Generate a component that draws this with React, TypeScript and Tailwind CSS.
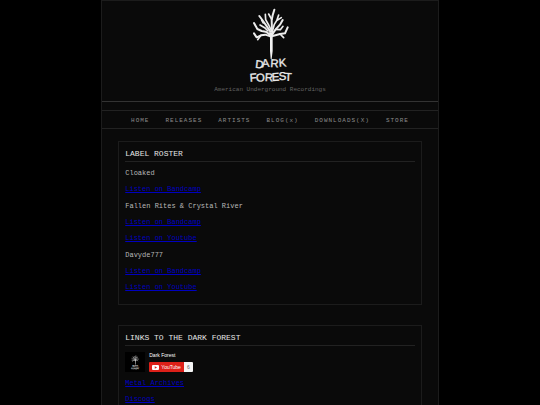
import React from "react";

interface NavItem {
  label: string;
  href: string;
}

interface Artist {
  name: string;
  links: string[];
}

const navItems: NavItem[] = [
  { label: "HOME", href: "#home" },
  { label: "RELEASES", href: "#releases" },
  { label: "ARTISTS", href: "#artists" },
  { label: "BLOG(x)", href: "#blog" },
  { label: "DOWNLOADS(X)", href: "#downloads" },
  { label: "STORE", href: "#store" },
];

const roster: Artist[] = [
  { name: "Cloaked", links: ["Listen on Bandcamp"] },
  {
    name: "Fallen Rites & Crystal River",
    links: ["Listen on Bandcamp", "Listen on Youtube"],
  },
  { name: "Davyde777", links: ["Listen on Bandcamp", "Listen on Youtube"] },
];

const Logo: React.FC<{ className: string }> = ({ className }) => (
  <svg viewBox="0 0 180 252" className={className} role="img" aria-label="Dark Forest">
    {/* trunk */}
    <path d="M87 94 L101 94 L98 110 L98 150 L95 174 L92 174 L90 150 L90 110 Z" fill="#f2f2f2" />
    {/* branches */}
    <g fill="none" stroke="#ececec" strokeLinecap="round" strokeLinejoin="round">
      <path
        strokeWidth="6"
        d="M42 97 L50 109 L63 103 L76 101 L93 107 M42 66 L52 84 L65 90 L77 92 L92 102 M58 45 L67 57 L79 74 L91 92 M103 26 L98 43 L95 57 L96 92 M128 57 L120 71 L107 85 L98 98 M143 79 L135 97 L120 99 L98 105"
      />
      <path
        strokeWidth="5"
        d="M76 40 L77 56 L86 72 L94 88 M86 39 L95 55 M116 42 L110 59 L103 70 L98 88 M60 72 L74 80 L84 90 M63 103 L53 116 M120 99 L131 110 M107 85 L121 86 L129 76 M110 59 L124 50 M65 57 L70 66"
      />
    </g>
    {/* lettering */}
    <g
      fill="#ececec"
      stroke="#ececec"
      strokeWidth="1"
      fontFamily="'Liberation Sans', Arial, sans-serif"
      fontSize="34"
    >
      <text x="45 66 91 117" y="200 199 198 197" rotate="6 -4 3 -4">
        DARK
      </text>
      <text x="30 49 74 96 117 134" y="242 242 240 240 238 239" rotate="-4 -4 3 -3 -4 2">
        FOREST
      </text>
    </g>
  </svg>
);

const Panel: React.FC<{ title: string; children: React.ReactNode }> = ({
  title,
  children,
}) => (
  <section className="border border-[#1c1c1c] px-1.5 pt-1.5 pb-3">
    <h2 className="mb-1.5 border-b border-[#222222] pb-px text-[8px] leading-3 text-[#e4e4e4]">
      {title}
    </h2>
    {children}
  </section>
);

const TextLink: React.FC<{ href: string; children: React.ReactNode }> = ({
  href,
  children,
}) => (
  <a href={href} className="text-[#0000c0] underline">
    {children}
  </a>
);

const YoutubeBadge: React.FC = () => (
  <div className="flex gap-1 font-['Liberation_Sans',Arial,sans-serif]">
    <div className="flex size-5 items-center justify-center bg-black">
      <Logo className="h-4 w-3" />
    </div>
    <div className="flex flex-col gap-1">
      <span className="text-[5px] leading-[6px] text-white">Dark Forest</span>
      <a href="#youtube" className="flex h-2.5 text-[5px] leading-[10px]">
        <span className="flex items-center gap-0.5 rounded-l-[1px] bg-[#dd2019] px-[3px] text-white">
          <svg viewBox="0 0 14 10" className="h-[5px] w-[7px]" aria-hidden="true">
            <rect width="14" height="10" rx="2" fill="#ffffff" />
            <path d="M5.5 2.5 L10 5 L5.5 7.5 Z" fill="#dd2019" />
          </svg>
          YouTube
        </span>
        <span className="w-[9px] rounded-r-[1px] bg-[#f5f5f5] text-center text-[#666666]">
          6
        </span>
      </a>
    </div>
  </div>
);

const App: React.FC = () => {
  return (
    <div className="min-h-screen bg-black font-['Liberation_Mono','Courier_New',monospace]">
      <div className="mx-auto min-h-screen w-5/8 max-w-[1080px] border border-[#1c1c1c] bg-[#0a0a0a]">
        <header className="flex flex-col items-center border-b border-[#333333] pb-1.5">
          <Logo className="h-[84px] w-[60px]" />
          <p className="text-[6px] leading-[10px] text-[#626262]">
            American Underground Recordings
          </p>
        </header>

        <nav className="mt-2 flex justify-center gap-4 border-y border-[#222222] pt-0.5 text-[6px] leading-[15px] tracking-[1px] text-[#8a8a8a]">
          {navItems.map((item) => (
            <a key={item.label} href={item.href}>
              {item.label}
            </a>
          ))}
        </nav>

        <main className="flex flex-col gap-5 px-4 py-3 text-[7px] leading-[10px] text-[#b8b8b8]">
          <Panel title="LABEL ROSTER">
            <div className="flex flex-col gap-[7px]">
              {roster.map((artist) => (
                <div key={artist.name} className="flex flex-col items-start gap-1.5">
                  <h3>{artist.name}</h3>
                  {artist.links.map((link) => (
                    <TextLink key={link} href="#listen">
                      {link}
                    </TextLink>
                  ))}
                </div>
              ))}
            </div>
          </Panel>

          <Panel title="LINKS TO THE DARK FOREST">
            <div className="flex flex-col items-start gap-1.5">
              <YoutubeBadge />
              <TextLink href="#metal-archives">Metal Archives</TextLink>
              <TextLink href="#discogs">Discogs</TextLink>
            </div>
          </Panel>
        </main>
      </div>
    </div>
  );
};

export default App;
